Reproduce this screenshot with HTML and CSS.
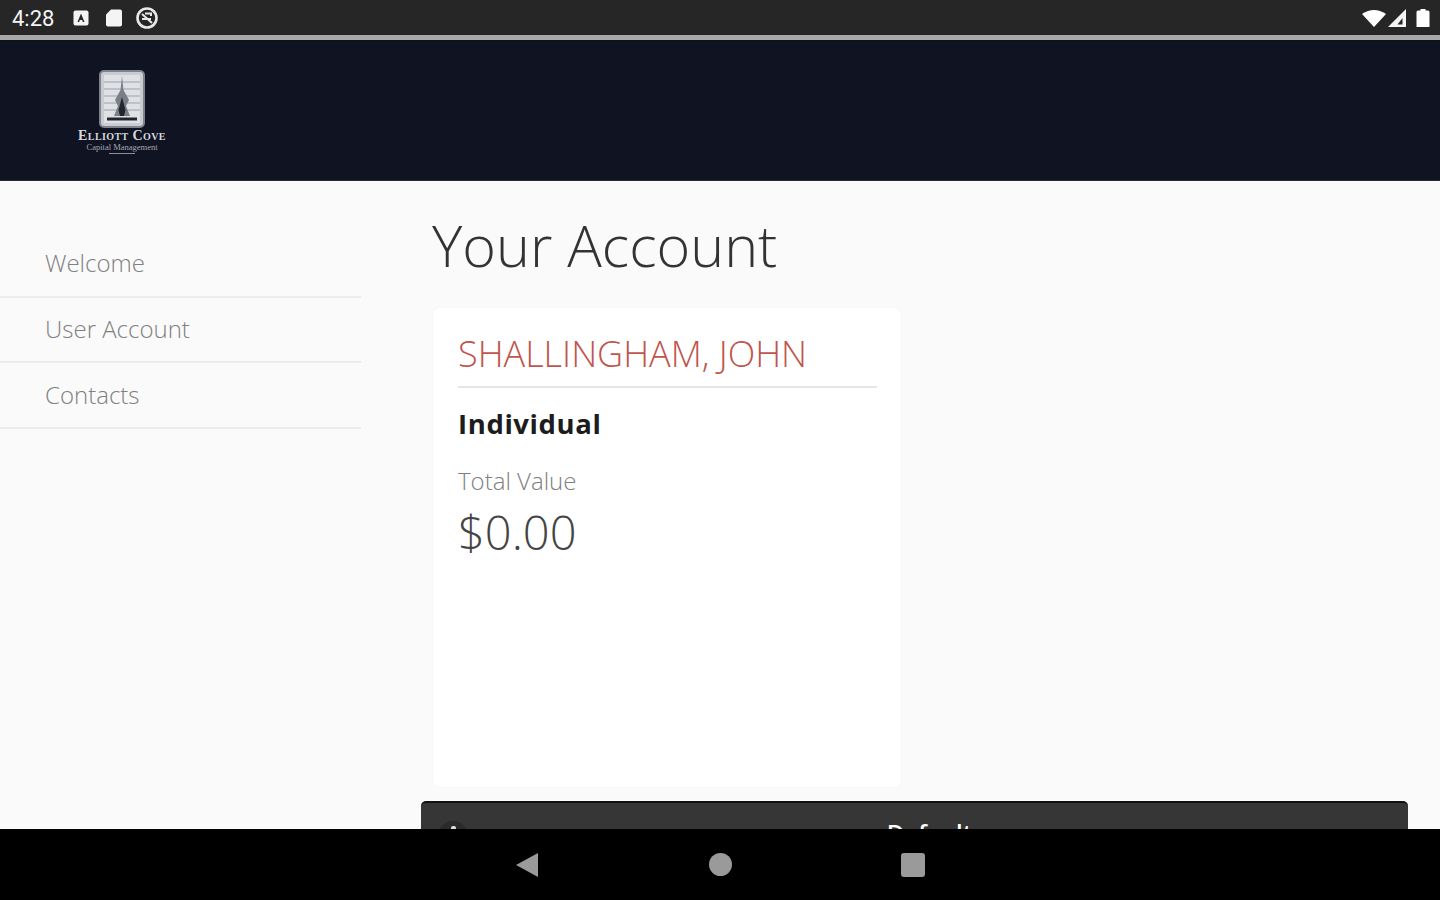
FILE: index.html
```html
<!DOCTYPE html>
<html lang="en">
  <head>
    <meta charset="UTF-8" />
    <meta name="viewport" content="width=device-width, initial-scale=1.0" />
    <title>Your Account</title>
    <link rel="stylesheet" href="styles.css">
  </head>
  <body>
    <!-- Android status bar -->
    <div class="status-bar">
      <div class="status-left">
        <span class="clock">4:28</span>
        <svg class="status-icon" width="18" height="18" viewBox="0 0 18 18">
          <rect x="1.5" y="1.5" width="15" height="15" rx="2" fill="#f4f4f4"/>
          <path d="M9 4.5 L12.5 13 H10.8 L10.2 11 H7.8 L7.2 13 H5.5 Z" fill="#262626"/>
        </svg>
        <svg class="status-icon" width="20" height="20" viewBox="0 0 20 20">
          <path d="M7 1.5 H16 a2 2 0 0 1 2 2 V16.5 a2 2 0 0 1 -2 2 H4 a2 2 0 0 1 -2 -2 V6.5 Z" fill="#f4f4f4"/>
        </svg>
        <svg class="status-icon status-ring" width="24" height="24" viewBox="0 0 24 24">
          <circle cx="12" cy="12" r="9.5" fill="none" stroke="#e8e8e8" stroke-width="2.6"/>
          <path d="M7 8 L17 17 M7 13 H16 M10 7.5 H16 V10" fill="none" stroke="#e8e8e8" stroke-width="2"/>
        </svg>
      </div>
      <div class="status-right">
        <svg width="26" height="20" viewBox="0 0 26 20">
          <path d="M1 6 Q13 -2 25 6 L13 19 Z" fill="#fff"/>
        </svg>
        <svg class="signal" width="20" height="20" viewBox="0 0 20 20">
          <path d="M1 19 L19 1 V19 Z" fill="#f4f4f4"/>
          <path d="M10.5 16.5 L15.5 10 V16.5 Z" fill="#262626"/>
        </svg>
        <svg width="14" height="20" viewBox="0 0 14 20">
          <path d="M4.5 1 H9.5 V2.5 H12 a1.5 1.5 0 0 1 1.5 1.5 V19 H.5 V4 A1.5 1.5 0 0 1 2 2.5 H4.5 Z" fill="#fff"/>
        </svg>
      </div>
    </div>

    <!-- Brand header -->
    <header class="top-header">
      <div class="logo">
        <svg class="logo-mark" width="46" height="58" viewBox="0 0 46 58">
          <rect x="1" y="1" width="44" height="56" rx="4" fill="#c9ccd0" stroke="#7f838c" stroke-width="2"/>
          <rect x="5" y="5" width="36" height="48" fill="#dfe1e4"/>
          <path d="M5 12 H41 M5 19 H41 M5 26 H41 M5 33 H41 M5 40 H41" stroke="#b4b8bf" stroke-width="1.5"/>
          <path d="M23 6 L24.5 20 L30 30 L27 36 L31 46 H15 L19 36 L16 30 L21.5 20 Z" fill="#7b7f87"/>
          <path d="M19.5 40 L23 27 L26.5 40 L25 46 H21 Z" fill="#23262e"/>
          <path d="M8 49 H38" stroke="#23262e" stroke-width="3"/>
        </svg>
        <div class="logo-name">Elliott Cove</div>
        <div class="logo-sub">Capital Management</div>
        <div class="logo-rule"></div>
      </div>
    </header>

    <div class="page-body">
      <!-- Side menu -->
      <nav class="side-menu">
        <a class="menu-item">Welcome</a>
        <a class="menu-item menu-item-short">User Account</a>
        <a class="menu-item menu-item-last">Contacts</a>
      </nav>

      <main class="content">
        <h1>Your Account</h1>
        <div class="account-card">
          <div class="account-name">SHALLINGHAM, JOHN</div>
          <div class="account-type">Individual</div>
          <div class="value-label">Total Value</div>
          <div class="value-amount">$0.00</div>
        </div>
        <div class="default-bar">
          <span class="bar-icon"></span>
          <span class="bar-title">Default</span>
        </div>
      </main>
    </div>

    <!-- Android nav bar -->
    <div class="nav-bar">
      <svg class="nav-back" width="24" height="26" viewBox="0 0 24 26"><path d="M23 1 V25 L1 13 Z" fill="#9a9a9a"/></svg>
      <span class="nav-circle"></span>
      <span class="nav-square"></span>
    </div>
  </body>
</html>
```

FILE: styles.css
```css
/* General Styles */
* {
  box-sizing: border-box;
}

body {
  margin: 0;
  height: 900px;
  overflow: hidden;
  display: flex;
  flex-direction: column;
  font-family: "Open Sans", sans-serif;
  background-color: #fafafa;
}

/* Status bar */
.status-bar {
  height: 41px;
  flex-shrink: 0;
  display: flex;
  justify-content: space-between;
  align-items: center;
  padding: 0 10px 4px 12px;
  background-color: #262626;
  border-bottom: 1px solid #111;
  box-shadow: inset 0 -5px 0 #a8a8a8;
  color: #f4f4f4;
}

.status-left {
  display: flex;
  align-items: center;
  gap: 14px;
}

.status-right {
  display: flex;
  align-items: center;
}

.clock {
  font-family: "Roboto", sans-serif;
  font-size: 22px;
  margin-right: 4px;
}

.status-ring {
  margin-left: -3px;
}

.signal {
  margin-right: 9px;
}

/* Header */
.top-header {
  height: 140px;
  flex-shrink: 0;
  padding: 29px 0 0 78px;
  background-color: #0f1322;
  border-bottom: 1px solid #2a2a2a;
}

.logo {
  width: 88px;
  display: flex;
  flex-direction: column;
  align-items: center;
  color: #d6d8dc;
}

.logo-name {
  margin-top: 1px;
  font-family: "Liberation Serif", serif;
  font-size: 14px;
  font-weight: bold;
  line-height: 13px;
  letter-spacing: 0.4px;
  font-variant: small-caps;
  white-space: nowrap;
}

.logo-sub {
  margin-top: 1px;
  font-family: "Liberation Serif", serif;
  font-size: 8.5px;
  line-height: 8px;
  white-space: nowrap;
  color: #a4a7ae;
}

.logo-rule {
  width: 26px;
  height: 1px;
  margin-top: 2px;
  background-color: #8b8f98;
}

/* Main area */
.page-body {
  flex: 1;
  min-height: 0;
  display: flex;
  overflow: hidden;
}

.side-menu {
  width: 361px;
  flex-shrink: 0;
  padding-top: 51px;
}

.menu-item {
  display: block;
  height: 66px;
  padding: 16px 0 0 45px;
  font-size: 24px;
  font-weight: 300;
  line-height: 30px;
  color: #808080;
  border-bottom: 2px solid #ececec;
}

.menu-item-short {
  height: 65px;
}

.menu-item-last {
  padding-top: 17px;
}

.content {
  flex: 1;
  padding: 29px 32px 0 60px;
}

h1 {
  margin: 0 0 28px 11px;
  font-size: 57.5px;
  font-weight: 300;
  line-height: 70px;
  color: #333;
}

/* Account card */
.account-card {
  width: 468px;
  height: 479px;
  margin-left: 12px;
  padding: 22px 24px 0 25px;
  background-color: #fff;
  border-radius: 6px;
  box-shadow: 0 0 2px rgba(0, 0, 0, 0.06);
}

.account-name {
  height: 58px;
  font-size: 36px;
  font-weight: 300;
  line-height: 48px;
  color: #c0554d;
  white-space: nowrap;
  border-bottom: 2px solid #e6e6e6;
}

.account-type {
  margin-top: 18px;
  font-size: 27.5px;
  font-weight: 700;
  line-height: 36px;
  letter-spacing: 0.6px;
  color: #1c1c1c;
}

.value-label {
  margin-top: 24px;
  font-size: 24px;
  font-weight: 300;
  line-height: 30px;
  color: #808080;
}

.value-amount {
  margin-top: 5px;
  font-size: 47px;
  font-weight: 300;
  line-height: 62px;
  color: #444;
}

/* Clipped bar under the card */
.default-bar {
  position: relative;
  height: 70px;
  margin-top: 14px;
  text-align: center;
  padding: 12px 0 0 30px;
  background-color: #363636;
  border-top: 2px solid #111;
  border-radius: 5px 5px 0 0;
}

.bar-title {
  font-size: 24px;
  font-weight: 600;
  line-height: 36px;
  color: #fff;
}

.bar-icon {
  position: absolute;
  left: 17px;
  top: 18px;
  width: 30px;
  height: 30px;
  border-radius: 50%;
  background-color: #2a2a2a;
}

.bar-icon::after {
  content: "";
  position: absolute;
  left: 13px;
  top: 5px;
  width: 5px;
  height: 12px;
  border-radius: 2px;
  background-color: #ddd;
}

/* Android nav bar */
.nav-bar {
  height: 71px;
  flex-shrink: 0;
  display: flex;
  justify-content: center;
  align-items: center;
  gap: 169px;
  background-color: #000;
}

.nav-back {
  margin: 0 1px 0 -1px;
}

.nav-circle {
  width: 23px;
  height: 23px;
  border-radius: 50%;
  background-color: #9a9a9a;
}

.nav-square {
  width: 24px;
  height: 24px;
  border-radius: 3px;
  background-color: #9a9a9a;
}
```
